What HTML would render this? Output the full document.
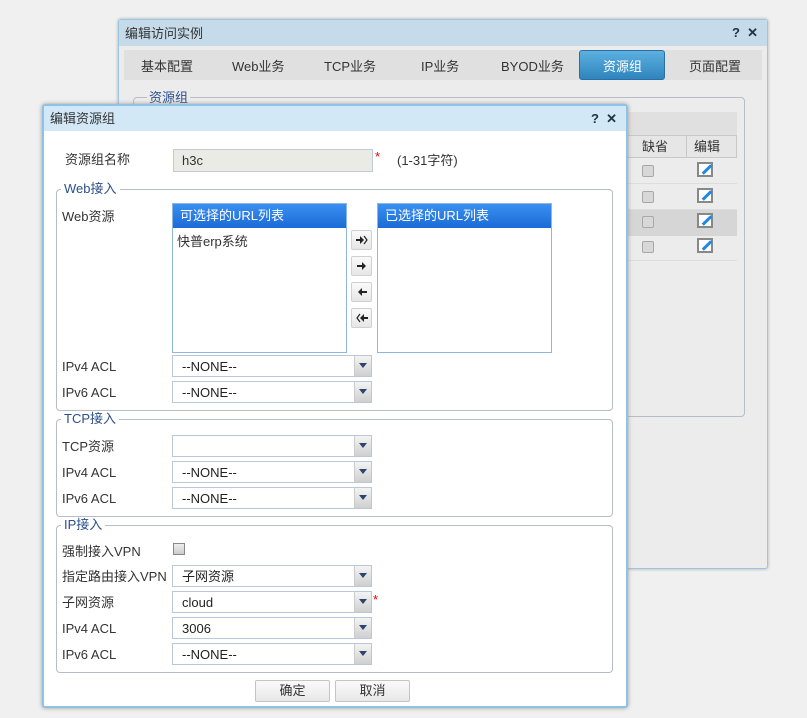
<!DOCTYPE html>
<html><head><meta charset="utf-8"><style>
*{box-sizing:border-box;margin:0;padding:0}
body{width:807px;height:718px;background:#f0f0f0;position:relative;overflow:hidden;font-family:"Liberation Sans","Noto Sans CJK SC",sans-serif;font-size:13px;color:#333}
.a{position:absolute}
.t{position:absolute;white-space:nowrap;font-size:13px;line-height:15px;color:#333}
.sel{position:absolute;width:200px;height:22px;border:1px solid #b9c7d8;background:#fff}
.sel span{position:absolute;left:9px;top:3px;line-height:15px;color:#222}
.sel i{position:absolute;right:0;top:0;width:17px;height:20px;background:linear-gradient(#f4f4f4,#cfcfcf);border-left:1px solid #ccc}
.sel i:after{content:"";position:absolute;left:4px;top:7px;border-left:4px solid transparent;border-right:4px solid transparent;border-top:5px solid #2a4570}
.fs{position:absolute;border:1px solid #b8bcc8;border-radius:4px}
.lg{position:absolute;background:#fff;padding:0 3px;color:#2a4f8a;font-size:13px;line-height:14px}
.ab{position:absolute;left:351px;width:21px;height:20px;border:1px solid #d0d0d0;border-radius:2px;background:linear-gradient(#fafafa,#e6e6e6)}
.ab svg{position:absolute;left:4px;top:4px}
.btn{position:absolute;top:680px;width:75px;height:22px;border:1px solid #c4c4c4;border-radius:2px;background:linear-gradient(#fafafa,#e8e8e8);text-align:center;line-height:20px}
.cb{position:absolute;left:642px;width:12px;height:12px;border:1px solid #a8a8a8;border-radius:2px;background:#d8d8d8}
.ed{position:absolute;left:697px;width:16px;height:15px;border:2px solid #888;background:#fff}
.ed:after{content:"";position:absolute;left:2px;top:4px;width:12px;height:3px;background:#1e88e5;transform:rotate(-45deg)}
</style></head><body>
<div class="a" style="left:118px;top:19px;width:650px;height:550px;background:#ececec;border:1px solid #9cc5e0;border-radius:3px;box-shadow:0 0 3px #aaa"></div>
<div class="a" style="left:119px;top:20px;width:648px;height:26px;background:#c5dbe9"></div>
<div class="t" style="left:125px;top:26px">编辑访问实例</div>
<div class="t" style="left:732px;top:25px;font-weight:bold;color:#234">?&nbsp; ✕</div>
<div class="a" style="left:124px;top:50px;width:638px;height:30px;background:#e0e0e0"></div>
<div class="a" style="left:579px;top:50px;width:86px;height:30px;background:linear-gradient(#5cb0e0,#2f84bd);border:1px solid #2a70a5;border-radius:3px"></div>
<div class="t" style="left:141px;top:59px">基本配置</div>
<div class="t" style="left:232px;top:59px">Web业务</div>
<div class="t" style="left:324px;top:59px">TCP业务</div>
<div class="t" style="left:421px;top:59px">IP业务</div>
<div class="t" style="left:501px;top:59px">BYOD业务</div>
<div class="t" style="left:603px;top:59px;color:#fff">资源组</div>
<div class="t" style="left:689px;top:59px">页面配置</div>
<div class="a" style="left:133px;top:97px;width:612px;height:320px;border:1px solid #b8bcc8;border-radius:4px"></div>
<div class="t" style="left:147px;top:90px;background:#ececec;padding:0 2px;color:#2a4f8a">资源组</div>
<div class="a" style="left:140px;top:112px;width:597px;height:23px;background:#e0e0e0"></div>
<div class="a" style="left:600px;top:135px;width:137px;height:23px;background:#e6e6e6;border:1px solid #c8c8c8"></div>
<div class="a" style="left:686px;top:135px;width:1px;height:23px;background:#c8c8c8"></div>
<div class="t" style="left:642px;top:139px">缺省</div>
<div class="t" style="left:694px;top:139px">编辑</div>
<div class="a" style="left:600px;top:158px;width:137px;height:26px;border-bottom:1px solid #ddd"></div>
<div class="a" style="left:600px;top:184px;width:137px;height:26px;border-bottom:1px solid #ddd"></div>
<div class="a" style="left:600px;top:210px;width:137px;height:26px;background:#d5d6d5"></div>
<div class="a" style="left:600px;top:236px;width:137px;height:25px;border-bottom:1px solid #ddd"></div>
<div class="cb" style="top:165px"></div><div class="cb" style="top:191px"></div><div class="cb" style="top:216px"></div><div class="cb" style="top:241px"></div>
<div class="ed" style="top:162px"></div><div class="ed" style="top:188px"></div><div class="ed" style="top:213px"></div><div class="ed" style="top:238px"></div>
<div class="a" style="left:42px;top:104px;width:586px;height:604px;background:#fff;border:2px solid #8ec3e6;border-radius:3px;box-shadow:0 0 4px #999"></div>
<div class="a" style="left:44px;top:106px;width:582px;height:25px;background:#d2e8f7"></div>
<div class="t" style="left:50px;top:111px">编辑资源组</div>
<div class="t" style="left:591px;top:111px;font-weight:bold;color:#234">?&nbsp; ✕</div>
<div class="t" style="left:65px;top:152px">资源组名称</div>
<div class="a" style="left:173px;top:149px;width:200px;height:23px;background:#ebebe6;border:1px solid #c2cad6"></div>
<div class="t" style="left:182px;top:153px">h3c</div>
<div class="t" style="left:375px;top:149px;color:#e00">*</div>
<div class="t" style="left:397px;top:153px">(1-31字符)</div>
<div class="fs" style="left:56px;top:189px;width:557px;height:222px"></div>
<div class="lg" style="left:61px;top:182px">Web接入</div>
<div class="t" style="left:62px;top:209px">Web资源</div>
<div class="a" style="left:172px;top:203px;width:175px;height:150px;border:1px solid #8eb6e2"></div>
<div class="a" style="left:173px;top:204px;width:173px;height:24px;background:linear-gradient(#3b8ff0,#1a6bd6)"></div>
<div class="t" style="left:180px;top:208px;color:#fff">可选择的URL列表</div>
<div class="t" style="left:177px;top:234px">快普erp系统</div>
<div class="a" style="left:377px;top:203px;width:175px;height:150px;border:1px solid #8eb6e2"></div>
<div class="a" style="left:378px;top:204px;width:173px;height:24px;background:linear-gradient(#3b8ff0,#1a6bd6)"></div>
<div class="t" style="left:385px;top:208px;color:#fff">已选择的URL列表</div>
<div class="ab" style="top:230px"><svg width="12" height="10"><path d="M0 4h4V1l4 4-4 4V6H0z" fill="#222"/><path d="M8 1l3 4-3 4" stroke="#222" fill="none" stroke-width="1.2"/></svg></div>
<div class="ab" style="top:256px"><svg width="12" height="10"><path d="M1 4h5V1l4 4-4 4V6H1z" fill="#222"/></svg></div>
<div class="ab" style="top:282px"><svg width="12" height="10"><path d="M11 4H6V1L2 5l4 4V6h5z" fill="#222"/></svg></div>
<div class="ab" style="top:308px"><svg width="12" height="10"><path d="M12 4H8V1L4 5l4 4V6h4z" fill="#222"/><path d="M4 1L1 5l3 4" stroke="#222" fill="none" stroke-width="1.2"/></svg></div>
<div class="t" style="left:62px;top:359px">IPv4 ACL</div>
<div class="sel" style="left:172px;top:355px"><span>--NONE--</span><i></i></div>
<div class="t" style="left:62px;top:385px">IPv6 ACL</div>
<div class="sel" style="left:172px;top:381px"><span>--NONE--</span><i></i></div>
<div class="fs" style="left:56px;top:419px;width:557px;height:98px"></div>
<div class="lg" style="left:61px;top:412px">TCP接入</div>
<div class="t" style="left:62px;top:439px">TCP资源</div>
<div class="sel" style="left:172px;top:435px"><span></span><i></i></div>
<div class="t" style="left:62px;top:465px">IPv4 ACL</div>
<div class="sel" style="left:172px;top:461px"><span>--NONE--</span><i></i></div>
<div class="t" style="left:62px;top:491px">IPv6 ACL</div>
<div class="sel" style="left:172px;top:487px"><span>--NONE--</span><i></i></div>
<div class="fs" style="left:56px;top:525px;width:557px;height:148px"></div>
<div class="lg" style="left:61px;top:518px">IP接入</div>
<div class="t" style="left:62px;top:544px">强制接入VPN</div>
<div class="a" style="left:173px;top:543px;width:12px;height:12px;border:1px solid #888;background:linear-gradient(#eee,#ccc)"></div>
<div class="t" style="left:62px;top:569px">指定路由接入VPN</div>
<div class="sel" style="left:172px;top:565px"><span>子网资源</span><i></i></div>
<div class="t" style="left:62px;top:595px">子网资源</div>
<div class="sel" style="left:172px;top:591px"><span>cloud</span><i></i></div>
<div class="t" style="left:373px;top:592px;color:#e00">*</div>
<div class="t" style="left:62px;top:621px">IPv4 ACL</div>
<div class="sel" style="left:172px;top:617px"><span>3006</span><i></i></div>
<div class="t" style="left:62px;top:647px">IPv6 ACL</div>
<div class="sel" style="left:172px;top:643px"><span>--NONE--</span><i></i></div>
<div class="btn" style="left:255px">确定</div>
<div class="btn" style="left:335px">取消</div>
</body></html>
